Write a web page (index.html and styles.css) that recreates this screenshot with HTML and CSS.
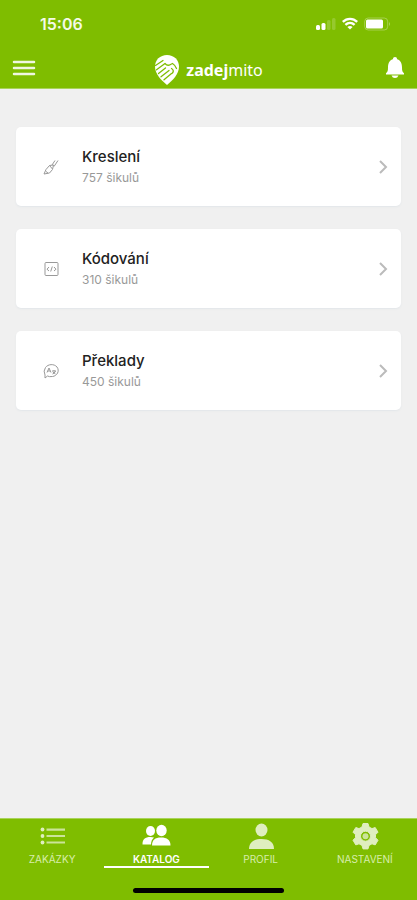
FILE: index.html
```html
<!DOCTYPE html>
<html lang="cs">
<head>
<meta charset="utf-8">
<meta name="viewport" content="width=device-width, initial-scale=1">
<title>zadejmito</title>
<link rel="stylesheet" href="styles.css">
</head>
<body>
<header class="header">
  <div class="status">
    <time class="clock">15:06</time>
    <div class="status-icons">
      <svg width="20" height="14" viewBox="0 0 20 14" fill="#fff"><rect y="8" width="4" height="5" rx="1.5"/><rect x="5.5" y="6" width="4" height="7" rx="1.5"/><rect x="11" y="3" width="3.5" height="10" rx="1.5" opacity=".18"/><rect x="16" y="1" width="3.5" height="12" rx="1.5" opacity=".18"/></svg>
      <svg width="16" height="14" viewBox="0 0 16 14" fill="none" stroke="#fff" stroke-width="2.4"><path d="M.8 4.9C5 .8 11 .8 15.2 4.9M3.4 7.9C6.1 5.4 9.9 5.4 12.6 7.9"/><path d="M5.4 9.9Q8 8 10.6 9.9L8 12.6Z" fill="#fff" stroke="none"/></svg>
      <svg width="27" height="14" viewBox="0 0 27 14"><rect x=".7" y="1" width="23" height="12" rx="3.5" fill="none" stroke="#fff" stroke-opacity=".3"/><rect x="2" y="2.5" width="17" height="9" rx="1.5" fill="#fff"/><path d="M25 5q2 2 0 4z" fill="#fff" opacity=".35"/></svg>
    </div>
  </div>
  <div class="bar">
    <button class="icon-button" aria-label="Menu"><svg width="24" height="16" viewBox="0 0 24 16" stroke="#fff" stroke-opacity=".88" stroke-width="2.5" stroke-linecap="round"><path d="M2 2H22M2 8H22M2 14H22"/></svg></button>
    <a class="brand" href="#">
      <svg width="26" height="32" viewBox="0 0 26 32"><path d="M13 1C6 1 1 6 1 12.5C1 20 7 26 13 31C19 26 25 20 25 12.5C25 6 20 1 13 1Z" fill="#fff"/><g fill="none" stroke="#7fbd00" stroke-width="1.3" stroke-linecap="round" stroke-linejoin="round"><path d="M1.5 11.5L9 6.5M2.5 15.8L11 9.5Q13.5 12.5 16.5 10.5L18.5 9.5Q21 11 22.5 14.5M4.5 19.5L11.5 14M7 22.8L15 16.5M10 25.8L17.5 19.5M17.5 14.5Q20.5 16.5 18.5 19"/></g></svg>
      <span class="wordmark"><b>zadej</b>mito</span>
    </a>
    <button class="icon-button" aria-label="Oznámení"><svg width="20" height="24" viewBox="0 0 20 24" fill="#fff"><path d="M10 1Q12 1 12.2 3.2C16 4.2 17 8 17 11.5C17 15 17.5 16 19 17.3V18.5H1V17.3C2.5 16 3 15 3 11.5C3 8 4 4.2 7.8 3.2Q8 1 10 1ZM6.5 19.5H13.5Q12.5 22 10 22Q7.5 22 6.5 19.5Z"/></svg></button>
  </div>
</header>

<main class="catalog">
  <a class="card" href="#">
    <svg class="card-icon" viewBox="0 0 16 16"><path d="M1 15L3 10.5L6.5 6.5L10.5 6L9.5 10.5L6.5 14ZM6.5 6.5L9.5 10M9 6L12 1.5M11 7.5L15 1.5M3 12.5L5 14"/></svg>
    <span class="card-text"><span class="card-title">Kreslení</span><span class="card-count">757 šikulů</span></span>
    <svg class="chevron" viewBox="0 0 10 14"><path d="M2 1L8 7L2 13"/></svg>
  </a>
  <a class="card" href="#">
    <svg class="card-icon" viewBox="0 0 16 16"><rect x="2" y="1.5" width="13" height="13" rx="1"/><path d="M6 6L4 8.2L6 10M11 6L13 8.2L11 10M9.3 5.5L7.7 10.500"/></svg>
    <span class="card-text"><span class="card-title">Kódování</span><span class="card-count">310 šikulů</span></span>
    <svg class="chevron" viewBox="0 0 10 14"><path d="M2 1L8 7L2 13"/></svg>
  </a>
  <a class="card" href="#">
    <svg class="card-icon" viewBox="0 0 16 16"><path d="M2 15V12Q0 8 2.5 4.5C5 1 11 .5 14 4C17 8 14 13 9.5 13.5Q6 14 4.5 13ZM4 9.5L6 5L8 9.5M4.8 8H7.2M9 8H13M11 7V8M12.5 8Q11.5 10.5 9.5 11M9.8 9L12.5 11"/></svg>
    <span class="card-text"><span class="card-title">Překlady</span><span class="card-count">450 šikulů</span></span>
    <svg class="chevron" viewBox="0 0 10 14"><path d="M2 1L8 7L2 13"/></svg>
  </a>
</main>

<footer class="footer">
  <nav class="tabs">
    <a class="tab" href="#"><svg viewBox="0 0 30 28" fill="#fff"><circle cx="5.5" cy="7.5" r="1.9"/><circle cx="5.5" cy="14" r="1.9"/><circle cx="5.5" cy="20.5" r="1.9"/><path d="M9.5 6.5H28V8.7H9.5ZM9.5 12.9H28V15.1H9.5ZM9.5 19.4H28V21.6H9.5Z" opacity=".8"/></svg>ZAKÁZKY</a>
    <a class="tab active" href="#" aria-current="page"><svg viewBox="0 0 30 28" fill="#fff"><ellipse cx="9.5" cy="9" rx="4.5" ry="5"/><path d="M1.5 22.5C1.5 17 4 15 9.5 15L13 15.5Q10 18 10 22.5Z"/><ellipse cx="20.5" cy="8.5" rx="5.2" ry="5.7"/><path d="M11 23.5C11 18 14 15.5 20 15.5C26 15.5 29.5 18 29.5 23.5Z"/></svg>KATALOG</a>
    <a class="tab" href="#"><svg viewBox="0 0 30 28" fill="#fff"><ellipse cx="15.5" cy="8" rx="6" ry="6.5"/><path d="M3 27C3 20 8 17 15.5 17C23 17 28 20 28 27Z"/></svg>PROFIL</a>
    <a class="tab" href="#"><svg viewBox="0 0 30 28" fill="#fff" fill-rule="evenodd"><path stroke="#fff" stroke-linejoin="round" d="M13 1.5H18L19 5L22 6.6L25.2 5.5L28 10.2L25.5 12.7V15.7L28 18.2L25.2 22.9L22 21.8L19 23.4L18 26.9H13L12 23.4L9 21.8L5.8 22.9L3 18.2L5.5 15.7V12.7L3 10.2L5.8 5.5L9 6.6L12 5ZM15.5 9.2A5 5 0 1 0 15.5 19.2A5 5 0 1 0 15.5 9.2Z"/><circle cx="15.5" cy="14.2" r="3" opacity=".8"/></svg>NASTAVENÍ</a>
  </nav>
  <div class="home-indicator"></div>
</footer>
</body>
</html>
```
FILE: styles.css
```css
* { box-sizing: border-box; }

body {
  display: flex;
  flex-direction: column;
  min-height: 100vh;
  margin: 0;
  background: #f0f0f0;
  font-family: Inter, "Liberation Sans", sans-serif;
}

a { color: inherit; text-decoration: none; }
svg { display: block; flex: none; }

.header {
  background: #7fbd00;
  color: #fff;
  border-bottom: 1px solid #a9d35a;
}

.status {
  display: flex;
  align-items: center;
  justify-content: space-between;
  height: 48px;
  padding: 0 26px 0 40px;
}

.clock { font-size: 16px; font-weight: 600; color: #f4fae8; }

.status-icons { display: flex; gap: 6px; }

.bar {
  display: flex;
  align-items: center;
  justify-content: space-between;
  height: 40px;
  padding: 0 12px;
}

.icon-button {
  width: 24px;
  padding: 0;
  border: 0;
  background: none;
}

.icon-button svg { margin-left: auto; }

.brand {
  display: flex;
  align-items: center;
  gap: 6px;
  padding-top: 4px;
}

.wordmark {
  font-family: "Noto Sans", sans-serif;
  font-size: 16px;
  line-height: 24px;
}

.catalog {
  display: flex;
  flex: 1;
  flex-direction: column;
  gap: 23px;
  padding: 38px 16px;
}

.card {
  display: flex;
  align-items: center;
  height: 79px;
  padding: 0 13px 0 27px;
  border-radius: 5px;
  background: #fff;
  box-shadow: 0 1px 2px #e2e6e9;
}

.card-icon {
  width: 16px;
  height: 16px;
  fill: none;
  stroke: #999;
  stroke-width: 1;
}

.card-text {
  display: flex;
  flex: 1;
  flex-direction: column;
  gap: 3px;
  margin-left: 23px;
}

.card-title { color: #222; font-size: 15px; font-weight: 500; line-height: 20px; }
.card-count { color: #999; font-size: 12px; line-height: 16px; }

.chevron {
  width: 10px;
  height: 14px;
  fill: none;
  stroke: #bbb;
  stroke-width: 2;
}

.footer {
  padding-bottom: 7px;
  border-top: 1px solid #a9d35a;
  background: #7fbd00;
}

.tabs { display: grid; grid-template-columns: repeat(4, 1fr); }

.tab {
  display: flex;
  flex-direction: column;
  align-items: center;
  gap: 3px;
  height: 49px;
  padding-top: 3px;
  color: #d8edac;
  font-size: 10px;
  line-height: 12px;
}

.tab svg { width: 30px; height: 28px; opacity: .75; }
.tab.active { border-bottom: 2px solid #fff; color: #fff; font-weight: 600; }
.tab.active svg { opacity: 1; }

.home-indicator {
  width: 36%;
  height: 5px;
  margin: 20px auto 0;
  border-radius: 3px;
  background: #000;
}
```
